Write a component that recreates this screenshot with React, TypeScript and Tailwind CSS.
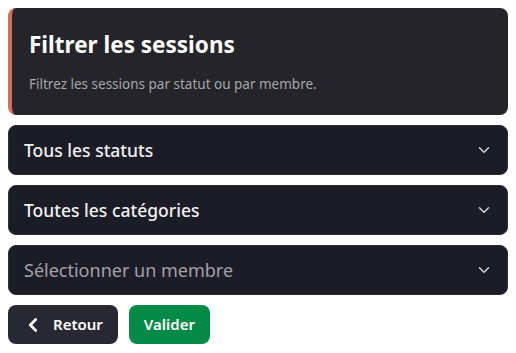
import { ChevronDown, ChevronLeft } from 'lucide-react';

const selects = [
  { label: 'Tous les statuts', placeholder: false },
  { label: 'Toutes les catégories', placeholder: false },
  { label: 'Sélectionner un membre', placeholder: true },
];

export default function App() {
  return (
    <div className="min-h-[353px] w-[516px] bg-white p-2 font-['Noto_Sans',sans-serif]">
      <div className="flex flex-col gap-[10px]">
        <div className="h-[107px] rounded-lg border-l-4 border-[#d0705a] bg-[#242429] pl-[17px] pt-[22px]">
          <h2 className="text-[22.5px] font-bold leading-[30px] text-white">Filtrer les sessions</h2>
          <p className="mt-[14px] text-[13.5px] text-[#a6a6ad]">Filtrez les sessions par statut ou par membre.</p>
        </div>

        {selects.map((s) => (
          <div
            key={s.label}
            className="flex h-[50px] items-center justify-between rounded-lg border border-[#2e2e38] bg-[#1c1c26] pl-[15px] pr-[14px]"
          >
            <span className={`${s.placeholder ? 'text-[18px] text-[#a1a1aa]' : 'text-[17.5px] font-medium text-[#f1f1f3]'}`}>
              {s.label}
            </span>
            <ChevronDown size={18} strokeWidth={2} className="text-[#d4d4d8]" />
          </div>
        ))}

        <div className="flex gap-[11px]">
          <button className="flex h-[39px] items-center gap-[9px] rounded-lg bg-[#282832] pl-[14px] pr-[15px] text-[15px] font-semibold text-white">
            <ChevronLeft size={22} strokeWidth={3} />
            Retour
          </button>
          <button className="h-[39px] rounded-lg bg-[#038a47] px-[15px] text-[15px] font-semibold text-white">
            Valider
          </button>
        </div>
      </div>
    </div>
  );
}
